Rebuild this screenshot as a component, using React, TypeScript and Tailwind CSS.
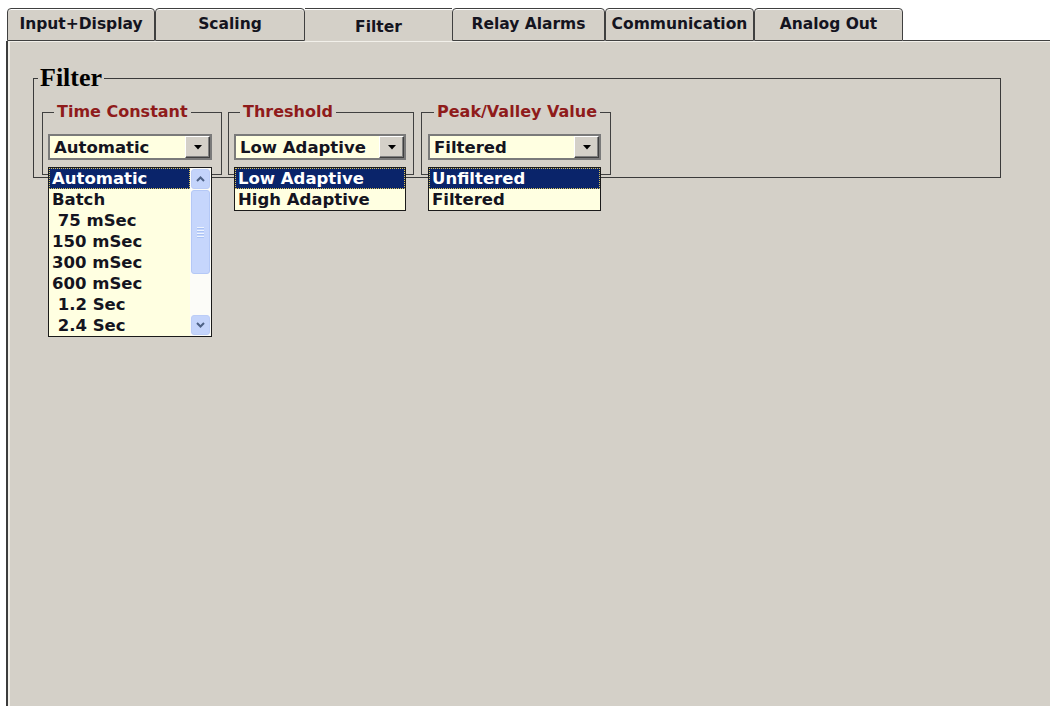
import React from 'react';

type TabDef = { label: string; width: string; active?: boolean };

const tabs: TabDef[] = [
  { label: 'Input+Display', width: 'w-[148px]' },
  { label: 'Scaling', width: 'w-[150px]' },
  { label: 'Filter', width: 'w-[147px]', active: true },
  { label: 'Relay Alarms', width: 'w-[153px]' },
  { label: 'Communication', width: 'w-[149px]' },
  { label: 'Analog Out', width: 'w-[149px]' },
];

const timeConstants = ['Automatic', 'Batch', ' 75 mSec', '150 mSec', '300 mSec', '600 mSec', ' 1.2 Sec', ' 2.4 Sec'];

function Tab({ tab }: { tab: TabDef }) {
  if (tab.active) {
    return (
      <div className={`${tab.width} shrink-0 bg-[#d4d0c8] border-t border-[#404040] shadow-[inset_0_1px_0_#fff] flex justify-center pt-[9px] text-[15.5px] leading-[18px]`}>
        {tab.label}
      </div>
    );
  }
  return (
    <div className={`${tab.width} shrink-0 bg-[#d4d0c8] border border-[#404040] rounded-t-[4px] shadow-[inset_0_1px_0_#fff] flex items-center justify-center overflow-hidden whitespace-nowrap text-[15.5px] leading-[18px] pb-[2px]`}>
      {tab.label}
    </div>
  );
}

function DropButton() {
  return (
    <div className="w-[25px] shrink-0 bg-[#d4d0c8] border border-t-white border-l-white border-b-[#404040] border-r-[#404040] shadow-[inset_-1px_-1px_0_#808080] flex items-center justify-center">
      <svg width="8" height="5" viewBox="0 0 8 5">
        <polygon points="0,0 8,0 4,4.5" fill="#000" />
      </svg>
    </div>
  );
}

function ArrowButton({ up }: { up?: boolean }) {
  return (
    <div className="h-[20px] mx-px rounded-[3px] border border-[#bccdf7] bg-[#c4d4fb] flex items-center justify-center">
      <svg width="9" height="6" viewBox="0 0 9 6">
        <polyline
          points={up ? '1,5 4.5,1.5 8,5' : '1,1 4.5,4.5 8,1'}
          fill="none"
          stroke="#4d6185"
          strokeWidth="2"
        />
      </svg>
    </div>
  );
}

function ScrollBar() {
  return (
    <div className="w-[21px] shrink-0 flex flex-col bg-[#fcfcf8] py-px">
      <ArrowButton up />
      <div className="flex-1 flex flex-col pt-px">
        <div className="h-[84px] mx-px rounded-[3px] border border-[#b4c8f6] bg-[#c6d6fc] flex flex-col items-center justify-center gap-[2px]">
          {[0, 1, 2, 3].map((i) => (
            <div key={i} className="w-[7px] h-px bg-[#eef4fe] shadow-[0_1px_0_#a9c2f5]" />
          ))}
        </div>
      </div>
      <ArrowButton />
    </div>
  );
}

function ListRow({ text, selected }: { text: string; selected?: boolean }) {
  return (
    <div
      className={`h-[21px] leading-[21px] pl-[3px] whitespace-pre ${
        selected ? 'bg-[#0a246a] text-white outline-1 outline-dotted outline-[#d8c25a] -outline-offset-1' : ''
      }`}
    >
      {text}
    </div>
  );
}

function Combo({ value, width, children }: { value: string; width: string; children?: React.ReactNode }) {
  return (
    <div className={`relative ${width}`}>
      <div className="h-[26px] flex border-2 border-[#7a7a7a] bg-[#ffffe1]">
        <div className="flex-1 pl-[4px] pt-px leading-[22px] whitespace-pre">{value}</div>
        <DropButton />
      </div>
      {children && (
        <div className="absolute left-0 top-[33px] w-full z-10 border border-[#1a1a1a] bg-[#ffffe1]">{children}</div>
      )}
    </div>
  );
}

function Group({ title, width, pad, children }: { title: string; width: string; pad: string; children: React.ReactNode }) {
  return (
    <fieldset className={`${width} border border-[#404040] ${pad} pt-[12px] pb-[14px]`}>
      <legend className="ml-[6px] px-[3px] text-[#8f1b1b] text-[16px] leading-[20px] whitespace-nowrap">{title}</legend>
      {children}
    </fieldset>
  );
}

export default function App() {
  return (
    <div className="w-[1050px] h-[706px] flex flex-col bg-white overflow-hidden font-['DejaVu_Sans',sans-serif] font-bold text-[#141420] text-[16.5px]">
      {/* Tab strip */}
      <div className="h-[41px] flex pt-[8px] pl-[7px]">
        {tabs.map((t) => (
          <Tab key={t.label} tab={t} />
        ))}
        <div className="flex-1 border-b border-[#404040]" />
      </div>

      {/* Page */}
      <div className="flex-1 ml-[6px] bg-[#d4d0c8] border-l-2 border-[#3c3c3c] shadow-[inset_2px_1px_0_#f2f0ea] pl-[25px] pt-[24px]">
        <fieldset className="w-[968px] border border-[#3a3a3a]">
          <legend className="ml-[4px] px-[2px] font-['Liberation_Serif',serif] text-[26px] leading-[26px] text-black">
            Filter
          </legend>
          <div className="flex px-[8px] pt-[11px] pb-[2px]">
            <Group title="Time Constant" width="w-[180px]" pad="px-[5px]">
              <Combo value="Automatic" width="w-[164px]">
                <div className="flex">
                  <div className="flex-1">
                    {timeConstants.map((t, i) => (
                      <ListRow key={t} text={t} selected={i === 0} />
                    ))}
                  </div>
                  <ScrollBar />
                </div>
              </Combo>
            </Group>
            <div className="w-[6px]" />
            <Group title="Threshold" width="w-[186px]" pad="px-[5px]">
              <Combo value="Low Adaptive" width="w-[172px]">
                <ListRow text="Low Adaptive" selected />
                <ListRow text="High Adaptive" />
              </Combo>
            </Group>
            <div className="w-[7px]" />
            <Group title="Peak/Valley Value" width="w-[190px]" pad="pl-[6px] pr-[5px]">
              <Combo value="Filtered" width="w-[173px]">
                <ListRow text="Unfiltered" selected />
                <ListRow text="Filtered" />
              </Combo>
            </Group>
          </div>
        </fieldset>
      </div>
    </div>
  );
}
